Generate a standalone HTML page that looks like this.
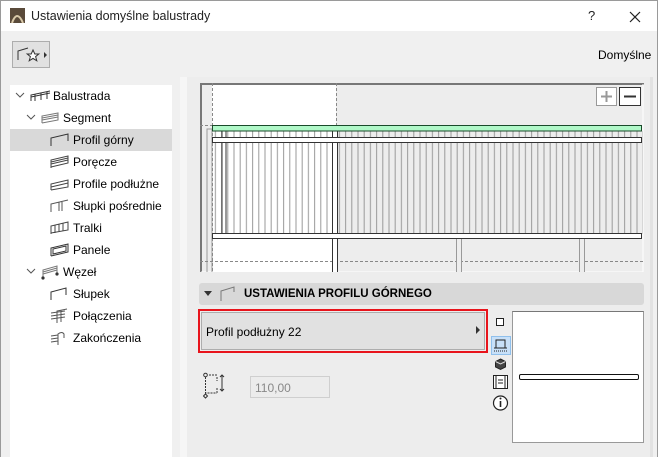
<!DOCTYPE html>
<html><head><meta charset="utf-8">
<style>
*{margin:0;padding:0;box-sizing:border-box}
body{width:658px;height:457px;overflow:hidden;background:#f0f0f0;font-family:"Liberation Sans",sans-serif;font-size:12px;color:#000;position:relative}
.abs{position:absolute}
.title{left:0;top:0;width:658px;height:31px;background:#fff;border:1px solid #9a9a9a;border-bottom:none}
.title span{position:absolute;left:30px;top:8px;font-size:12.5px;color:#222}
.tree{left:10px;top:85px;width:162px;height:372px;background:#fff}
.item{position:absolute;height:22px;line-height:22px;font-size:12px}
.sel{background:#d9d9d9}
.ico{position:absolute}
</style></head><body>
<div class="abs title"><svg class="ico" style="left:9px;top:7px" width="15" height="15"><rect width="15" height="15" fill="#5a4a3a"/><path d="M2 15 Q7 1 13 15" stroke="#d8c8a8" stroke-width="2" fill="none"/></svg><span>Ustawienia domyślne balustrady</span>
<span style="left:587px;top:7px;font-size:13px">?</span>
<svg class="ico" style="left:628px;top:10px" width="12" height="12"><path d="M1 1L11 11M11 1L1 11" stroke="#222" stroke-width="1.2"/></svg></div>
<div class="abs" style="left:657px;top:0;width:1px;height:457px;background:#9a9a9a"></div>
<div class="abs" style="left:0;top:0;width:1px;height:457px;background:#9a9a9a"></div>
<div class="abs" style="left:12px;top:41px;width:38px;height:27px;border:1px solid #adadad;background:#e1e1e1">
<svg width="36" height="25"><path d="M5 18V9L15 6" stroke="#333" fill="none"/><path d="M20 8l1.8 4h4l-3.2 2.6 1.2 4.2-3.8-2.4-3.8 2.4 1.2-4.2-3.2-2.6h4z" stroke="#333" fill="#fff"/><path d="M31 10l3 3-3 3z" fill="#333"/></svg></div>
<div class="abs" style="left:598px;top:48px;font-size:12px">Domyślne</div>
<div class="abs tree">
<div class="item" style="left:0;top:0;width:162px"><svg class="ico" style="left:5px;top:7px" width="10" height="8"><path d="M1 1l4 4 4-4" stroke="#555" fill="none"/></svg><svg class="ico" style="left:20px;top:5px" width="22" height="12"><path d="M1 11V5L20 1M5 11V4M11 10V3M17 9V2M1 7L20 3" stroke="#333" fill="none"/></svg><span style="position:absolute;left:43px">Balustrada</span></div>
<div class="item" style="left:0;top:22px;width:162px"><svg class="ico" style="left:16px;top:7px" width="10" height="8"><path d="M1 1l4 4 4-4" stroke="#555" fill="none"/></svg><svg class="ico" style="left:31px;top:5px" width="18" height="12"><path d="M1 11V4L17 1V8L1 11M1 6L17 3M1 8L17 5" stroke="#777" fill="none"/></svg><span style="position:absolute;left:53px">Segment</span></div>
<div class="item sel" style="left:0;top:44px;width:162px"><svg class="ico" style="left:40px;top:4px" width="20" height="14"><path d="M1 13V5L18 1V8" stroke="#333" fill="none"/></svg><span style="position:absolute;left:63px">Profil górny</span></div>
<div class="item" style="left:0;top:66px"><svg class="ico" style="left:40px;top:4px" width="20" height="14"><path d="M1 13V5L18 1V8L1 12M1 7L18 3M1 9L18 5" stroke="#444" fill="none"/></svg><span style="position:absolute;left:63px;white-space:nowrap">Poręcze</span></div>
<div class="item" style="left:0;top:88px"><svg class="ico" style="left:40px;top:4px" width="20" height="14"><path d="M1 13V7L18 3V10L1 13M1 10L18 6" stroke="#444" fill="none"/></svg><span style="position:absolute;left:63px;white-space:nowrap">Profile podłużne</span></div>
<div class="item" style="left:0;top:110px"><svg class="ico" style="left:40px;top:4px" width="20" height="14"><path d="M1 13V5L18 1M9 12V3M12 12V3" stroke="#555" fill="none"/></svg><span style="position:absolute;left:63px;white-space:nowrap">Słupki pośrednie</span></div>
<div class="item" style="left:0;top:132px"><svg class="ico" style="left:40px;top:4px" width="20" height="14"><path d="M1 13V5L18 1V9L1 12M5 12V4M9 11V3M13 10V2" stroke="#444" fill="none"/></svg><span style="position:absolute;left:63px">Tralki</span></div>
<div class="item" style="left:0;top:154px"><svg class="ico" style="left:40px;top:4px" width="20" height="14"><path d="M1 13V5L18 1V9L1 13M3 11V6L16 3V8Z" stroke="#333" fill="none"/></svg><span style="position:absolute;left:63px">Panele</span></div>
<div class="item" style="left:0;top:176px;width:162px"><svg class="ico" style="left:16px;top:7px" width="10" height="8"><path d="M1 1l4 4 4-4" stroke="#555" fill="none"/></svg><svg class="ico" style="left:30px;top:3px" width="20" height="16"><path d="M3 14V6L17 2V10M3 8L17 4M3 10L17 6" stroke="#777" fill="none"/><circle cx="3" cy="14" r="1.6" fill="#333"/><circle cx="17" cy="10" r="1.6" fill="#333"/></svg><span style="position:absolute;left:53px">Węzeł</span></div>
<div class="item" style="left:0;top:198px"><svg class="ico" style="left:40px;top:4px" width="20" height="14"><path d="M1 13V5L16 1V8" stroke="#333" fill="none"/></svg><span style="position:absolute;left:63px">Słupek</span></div>
<div class="item" style="left:0;top:220px"><svg class="ico" style="left:40px;top:3px" width="20" height="16"><path d="M7 15V3L17 1M11 14V2M1 5L15 3M1 8L15 6M1 11L15 9" stroke="#555" fill="none"/></svg><span style="position:absolute;left:63px;white-space:nowrap">Połączenia</span></div>
<div class="item" style="left:0;top:242px"><svg class="ico" style="left:40px;top:3px" width="20" height="16"><path d="M8 15V4Q12 1 14 4V8M1 6L8 5M1 9L8 8M1 12L8 11" stroke="#555" fill="none"/></svg><span style="position:absolute;left:63px;white-space:nowrap">Zakończenia</span></div>
</div>
<div class="abs" style="left:180px;top:77px;width:7px;height:380px;background:#f6f6f6"></div>
<div class="abs" style="left:187px;top:77px;width:466px;height:380px;background:#ededed"></div>
<div class="abs" style="left:650px;top:77px;width:3px;height:380px;background:#e2e2e2"></div>
<svg class="abs" style="left:200px;top:83px" width="444" height="189">
<defs><pattern id="bal" x="0" y="0" width="6.2" height="10" patternUnits="userSpaceOnUse"><line x1="3" y1="0" x2="3" y2="10" stroke="#999" stroke-width="1"/></pattern></defs>
<rect x="0" y="0" width="444" height="189" fill="#ededed"/>
<rect x="12" y="0" width="124" height="189" fill="#fff"/>
<path d="M1 189V1H444" stroke="#777" stroke-width="2" fill="none"/>
<path d="M443 1V189H1" stroke="#fff" fill="none"/>
<rect x="12" y="48" width="431" height="103" fill="url(#bal)"/>
<rect x="7" y="46" width="5" height="144" fill="none" stroke="#999"/>
<line x1="12.5" y1="0" x2="12.5" y2="189" stroke="#888" stroke-dasharray="3,2"/>
<line x1="136.5" y1="0" x2="136.5" y2="189" stroke="#888" stroke-dasharray="3,2"/>
<line x1="0" y1="42.5" x2="12" y2="42.5" stroke="#888" stroke-dasharray="3,2"/>
<line x1="0" y1="178.5" x2="444" y2="178.5" stroke="#888" stroke-dasharray="3,2"/>
<rect x="22" y="48" width="4" height="103" fill="#fff" stroke="#333"/>
<rect x="132.5" y="48" width="5" height="142" fill="#fff" stroke="#333"/>
<rect x="256.5" y="152" width="5" height="38" fill="#ededed" stroke="#999"/>
<rect x="379.5" y="152" width="5" height="38" fill="#ededed" stroke="#999"/>
<rect x="12.5" y="42.5" width="429" height="5.5" fill="#b0f8c8" stroke="#1a4a2a"/>
<rect x="12.5" y="54.5" width="429" height="5" fill="#fff" stroke="#333"/>
<rect x="12.5" y="150.5" width="429" height="5" fill="#fff" stroke="#333"/>
<rect x="396.5" y="4.5" width="20" height="18" fill="#fff" stroke="#999"/>
<path d="M406.5 8v11M401 13.5h11" stroke="#999" stroke-width="2"/>
<rect x="419.5" y="4.5" width="21" height="18" fill="#fff" stroke="#333"/>
<path d="M424 13.5h12" stroke="#333" stroke-width="2"/>
</svg>
<div class="abs" style="left:199px;top:283px;width:445px;height:22px;background:#d8d8d8;border-radius:3px">
<svg class="ico" style="left:5px;top:8px" width="8" height="6"><path d="M0 0h8l-4 5z" fill="#333"/></svg>
<svg class="ico" style="left:21px;top:3px" width="16" height="16"><path d="M1 15V5L14 1V6" stroke="#777" fill="none"/></svg>
<span style="position:absolute;left:45px;top:5px;font-weight:bold;font-size:11.5px">USTAWIENIA PROFILU GÓRNEGO</span></div>
<div class="abs" style="left:198px;top:309px;width:290px;height:44px;border:2px solid #e8141c;padding:1px">
<div style="width:100%;height:100%;background:#e1e1e1;border:1px solid #adadad;position:relative"><span style="position:absolute;left:4px;top:12px">Profil podłużny 22</span>
<svg class="ico" style="left:274px;top:13px" width="5" height="8"><path d="M0 0l4 4-4 4z" fill="#333"/></svg></div></div>
<svg class="abs" style="left:203px;top:372px" width="22" height="30"><circle cx="2.5" cy="3" r="1.8" fill="none" stroke="#333"/><path d="M2.5 5V21H14M6 3h8M14 5v4M14 16v5" stroke="#333" stroke-dasharray="2,1" fill="none"/><path d="M19 3v16M17 5l2-2 2 2M17 17l2 2 2-2" stroke="#333" fill="none"/><path d="M2.5 22l2 2-2 2-2-2z" fill="none" stroke="#333"/></svg>
<div class="abs" style="left:250px;top:376px;width:80px;height:22px;border:1px solid #cfcfcf;background:#ececec;color:#888;padding:4px 4px">110,00</div>
<svg class="abs" style="left:491px;top:314px" width="20" height="102">
<rect x="5.5" y="4.5" width="7" height="7" fill="#fff" stroke="#222"/>
<rect x="0.5" y="22.5" width="19" height="18" fill="#c8e0f8" stroke="#90c0ec"/>
<path d="M5 34V26h9v8M3 34h13" stroke="#222" fill="none"/><path d="M3 37h13" stroke="#222" stroke-dasharray="1,1"/>
<path d="M9.5 45l5 2.5v5.5l-5 2.5-5-2.5v-5.5z" fill="#444" stroke="#222"/><path d="M4.5 47.5l5 2.5 5-2.5" stroke="#ddd" fill="none"/>
<rect x="2.5" y="61.5" width="14" height="13" fill="#fff" stroke="#222"/><path d="M5 61v14M14 61v14M7 66h5M7 69h5" stroke="#222"/>
<circle cx="9.5" cy="89" r="7" fill="#fff" stroke="#222" stroke-width="1.2"/><path d="M9.5 87v6" stroke="#222" stroke-width="1.6"/><circle cx="9.5" cy="84.5" r="1" fill="#222"/>
</svg>
<div class="abs" style="left:512px;top:311px;width:132px;height:132px;background:#fff;border:1px solid #999;border-top-color:#777"></div>
<div class="abs" style="left:519px;top:374px;width:120px;height:6px;border:1.5px solid #111;border-radius:2px;background:#fff"></div>
</body></html>
